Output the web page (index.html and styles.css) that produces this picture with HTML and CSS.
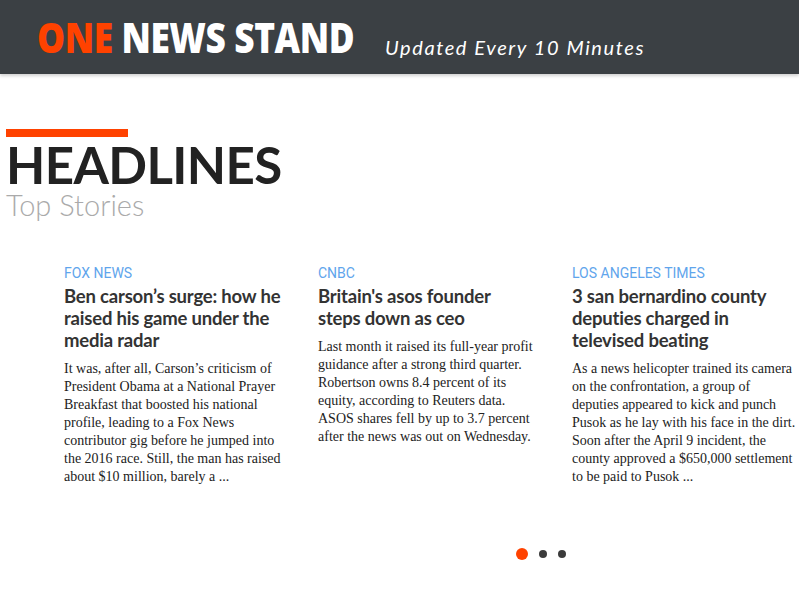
FILE: index.html
```html
<!DOCTYPE html>
<html>
<head>
<meta charset="utf-8">
<link rel="stylesheet" href="styles.css">
</head>
<body>
<header class="topbar">
  <div class="brand"><span class="brand-one">ONE</span> NEWS STAND</div>
  <div class="tagline">Updated Every 10 Minutes</div>
</header>
<main class="content">
  <section class="heading">
    <div class="accent"></div>
    <h1 class="title">HEADLINES</h1>
    <div class="subtitle">Top Stories</div>
  </section>
  <section class="cards">
    <article class="card">
      <div class="source">FOX NEWS</div>
      <h2 class="headline">Ben carson’s surge: how he raised his game under the media radar</h2>
      <p class="summary">It was, after all, Carson’s criticism of President Obama at a National Prayer Breakfast that boosted his national profile, leading to a Fox News contributor gig before he jumped into the 2016 race. Still, the man has raised about $10 million, barely a ...</p>
    </article>
    <article class="card">
      <div class="source">CNBC</div>
      <h2 class="headline">Britain's asos founder steps down as ceo</h2>
      <p class="summary">Last month it raised its full-year profit guidance after a strong third quarter. Robertson owns 8.4 percent of its equity, according to Reuters data. ASOS shares fell by up to 3.7 percent after the news was out on Wednesday.</p>
    </article>
    <article class="card">
      <div class="source">LOS ANGELES TIMES</div>
      <h2 class="headline">3 san bernardino county deputies charged in televised beating</h2>
      <p class="summary">As a news helicopter trained its camera on the confrontation, a group of deputies appeared to kick and punch Pusok as he lay with his face in the dirt. Soon after the April 9 incident, the county approved a $650,000 settlement to be paid to Pusok ...</p>
    </article>
  </section>
  <div class="dots">
    <span class="dot active"></span>
    <span class="dot"></span>
    <span class="dot"></span>
  </div>
</main>
</body>
</html>
```
FILE: styles.css
```css
* { box-sizing: border-box; }
html, body { margin: 0; padding: 0; background: #fff; }
body { font-family: Lato, "Liberation Sans", sans-serif; overflow: hidden; }

.topbar {
  height: 74px;
  background: #3b4044;
  display: flex;
  align-items: flex-end;
  padding: 0 0 17px 37px;
  box-shadow: 0 2px 3px rgba(0,0,0,0.18);
}
.brand {
  font-family: "Open Sans", sans-serif;
  font-weight: 800;
  font-size: 43px;
  line-height: 43px;
  color: #fff;
  letter-spacing: -0.5px;
  transform: scaleX(0.82);
  transform-origin: left center;
  margin-bottom: -1px;
  white-space: nowrap;
  width: 348px;
  flex: none;
}
.brand-one { color: #ff4200; }
.tagline {
  font-family: Lato, sans-serif;
  font-style: italic;
  font-size: 20px;
  color: #fff;
  letter-spacing: 1.6px;
  line-height: 20px;
  white-space: nowrap;
}

.content { padding: 55px 0 0 6px; }
.accent { width: 122px; height: 8px; background: #ff4200; }
.title {
  margin: 6px 0 0;
  font-family: Lato, sans-serif;
  font-weight: 700;
  font-size: 51px;
  line-height: 44px;
  color: #222;
  letter-spacing: -0.6px;
}
.subtitle {
  font-family: Lato, sans-serif;
  font-weight: 300;
  font-size: 29px;
  line-height: 30px;
  color: #aaa;
  margin-top: 3px;
}

.cards {
  display: grid;
  grid-template-columns: 218px 218px 224px;
  column-gap: 36px;
  padding-left: 58px;
  margin-top: 44px;
}
.source {
  font-family: Roboto, sans-serif;
  font-size: 14px;
  line-height: 18px;
  color: #5fa5ec;
}
.headline {
  margin: 3px 0 0;
  font-family: Lato, sans-serif;
  font-weight: 700;
  font-size: 18.5px;
  line-height: 22px;
  color: #333;
  letter-spacing: -0.2px;
}
.summary {
  margin: 9px 0 0;
  font-family: "Liberation Serif", serif;
  font-size: 14px;
  line-height: 18px;
  color: #222;
}

.dots {
  display: flex;
  align-items: center;
  gap: 11px;
  margin-top: 62px;
  padding-left: 510px;
}
.dot { width: 8px; height: 8px; border-radius: 50%; background: #3b3b3b; }
.dot.active { width: 12px; height: 12px; background: #ff4200; }
```
